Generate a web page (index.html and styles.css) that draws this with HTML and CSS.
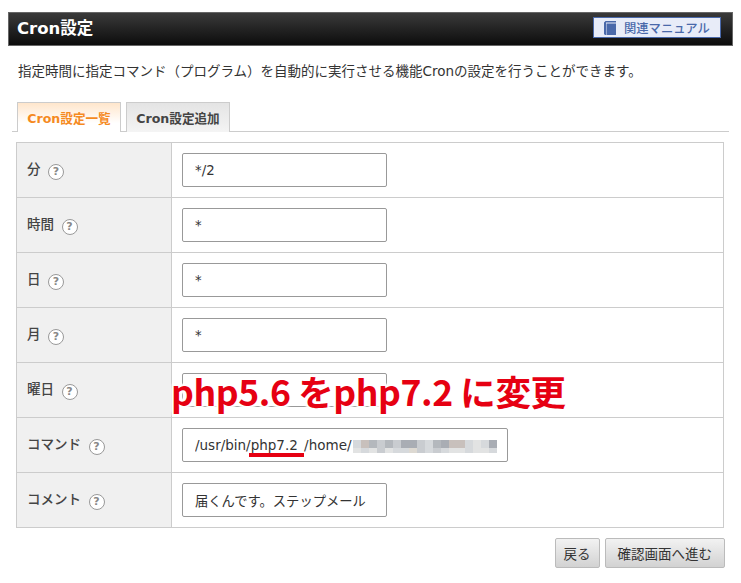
FILE: index.html
```html
<!DOCTYPE html>
<html lang="ja">
<head>
<meta charset="utf-8">
<title>Cron設定</title>
<link rel="stylesheet" href="styles.css">
</head>
<body>
<div class="page">
  <header class="titlebar">
    <h1>Cron設定</h1>
    <a class="manual" href="#">
      <svg class="book" viewBox="0 0 12 14" width="12" height="14"><path d="M0 1.5 1.5 0H12v1.5H2V14H1L0 13Z" fill="#4a69aa"/><rect x="2.5" y="2.5" width="9.5" height="11.5" fill="#4a69aa"/></svg>
      <span>関連マニュアル</span>
    </a>
  </header>
  <p class="lead">指定時間に指定コマンド（プログラム）を自動的に実行させる機能Cronの設定を行うことができます。</p>
  <nav class="tabs">
    <a class="tab active" href="#">Cron設定一覧</a>
    <a class="tab" href="#">Cron設定追加</a>
  </nav>
  <div class="formwrap">
    <table class="form">
      <tr><th>分<span class="help">?</span></th><td><input class="field" value="*/2"></td></tr>
      <tr><th>時間<span class="help">?</span></th><td><input class="field" value="*"></td></tr>
      <tr><th>日<span class="help">?</span></th><td><input class="field" value="*"></td></tr>
      <tr><th>月<span class="help">?</span></th><td><input class="field" value="*"></td></tr>
      <tr><th>曜日<span class="help">?</span></th><td><input class="field" value="*"></td></tr>
      <tr><th>コマンド<span class="help">?</span></th><td>
        <div class="cmd">
          <input class="field wide" value="/usr/bin/php7.2 /home/">
          <div class="underline"></div>
          <div class="blur">
            <i class="c3"></i><i class="c6"></i><i class="c2"></i><i class="c1"></i><i class="c2"></i><i class="c1"></i><i class="c4"></i><i class="c4"></i><i class="c1"></i><i class="c3"></i><i class="c2"></i><i class="c4"></i><i class="c6"></i><i class="c6"></i><i class="c3"></i><i class="c5"></i><i class="c3"></i><i class="c4"></i>
            <i class="c5"></i><i class="c3"></i><i class="c5"></i><i class="c1"></i><i class="c5"></i><i class="c3"></i><i class="c3"></i><i class="c7"></i><i class="c1"></i><i class="c3"></i><i class="c1"></i><i class="c3"></i><i class="c5"></i><i class="c5"></i><i class="c3"></i><i class="c5"></i><i class="c5"></i><i class="c3"></i>
          </div>
        </div>
      </td></tr>
      <tr><th>コメント<span class="help">?</span></th><td><input class="field" value="届くんです。ステップメール"></td></tr>
    </table>
    <div class="note">php5.6 をphp7.2 に変更</div>
  </div>
  <div class="actions">
    <button class="btn" type="button">戻る</button>
    <button class="btn next" type="button">確認画面へ進む</button>
  </div>
</div>
</body>
</html>
```
FILE: styles.css
```css
* { box-sizing: border-box; }
html, body { margin: 0; background: #fff; }
body {
  font-family: "DejaVu Sans", "Noto Sans CJK JP", sans-serif;
  font-size: 13px;
  color: #333;
  overflow: hidden;
}
.page { width: 741px; height: 583px; padding: 12px 8px 0; }
.titlebar {
  height: 34px;
  display: flex;
  align-items: center;
  justify-content: space-between;
  padding: 0 11px 0 8px;
  border: 1px solid #666;
  background: linear-gradient(#3a3a3a, #0c0c0c);
}
.titlebar h1 { margin: 0; font-size: 16.5px; font-weight: bold; color: #fff; line-height: 1; }
.manual {
  width: 128px;
  height: 21px;
  margin-top: -3px;
  display: flex;
  align-items: center;
  gap: 8px;
  padding-left: 10px;
  background: #e8ecf8;
  border: 1px solid #4a69aa;
  color: #4a69aa;
  font-size: 12.3px;
  font-weight: 500;
  text-decoration: none;
}
.lead { margin: 0; padding: 16px 0 0 10px; height: 56px; line-height: 18px; font-size: 13.5px; color: #333; white-space: nowrap; }
.tabs {
  margin: 0 4px;
  height: 30px;
  display: flex;
  gap: 5px;
  padding-left: 5px;
  border-bottom: 1px solid #ccc;
}
.tab {
  width: 104px;
  height: 30px;
  display: flex;
  align-items: center;
  justify-content: center;
  padding-bottom: 1px;
  border: 1px solid #ccc;
  border-bottom: 0;
  background: linear-gradient(#e4e4e4, #f4f4f4);
  color: #444;
  font-size: 12.6px;
  font-weight: bold;
  text-decoration: none;
}
.tab.active {
  height: 30px;
  background: linear-gradient(#ffe6cc, #fff 70%);
  color: #f58a1f;
  position: relative;
  z-index: 1;
  box-shadow: 0 1px 0 #fff;
}
.formwrap { position: relative; margin: 10px 9px 0 8px; }
.form { width: 708px; border-collapse: collapse; table-layout: fixed; }
.form th, .form td { height: 55px; border: 1px solid #ccc; padding: 0; }
.form th {
  width: 155px;
  padding-left: 10px;
  padding-bottom: 3px;
  background: #f0f0f0;
  text-align: left;
  font-size: 13.5px;
  font-weight: 500;
  color: #444;
}
.form td { padding-left: 10px; }
.help {
  display: inline-block;
  width: 16px;
  height: 16px;
  margin-left: 7.5px;
  vertical-align: -1px;
  border: 1px solid #999;
  border-radius: 50%;
  background: #fff;
  color: #888;
  font-size: 11px;
  font-weight: bold;
  line-height: 14px;
  text-align: center;
}
.field {
  display: block;
  width: 205px;
  height: 34px;
  padding: 0 12px;
  border: 1px solid #999;
  border-radius: 2px;
  background: #fff;
  color: #333;
  font: 13.3px "DejaVu Sans", "Noto Sans CJK JP", sans-serif;
}
.field.wide { width: 326px; font-size: 13.5px; word-spacing: 2px; }
.cmd { position: relative; width: 326px; }
.underline { position: absolute; left: 67px; top: 25px; width: 55px; height: 4px; background: #e60012; }
.blur {
  position: absolute;
  left: 171px;
  top: 12px;
  width: 144px;
  height: 13px;
  display: grid;
  grid-template-columns: repeat(18, 8px);
  grid-template-rows: 8px 5px;
  filter: blur(0.4px);
}
.c1 { background: #c9ccd0; }
.c2 { background: #b4b8bd; }
.c3 { background: #d6d9dc; }
.c4 { background: #a9adb4; }
.c5 { background: #e2e3e3; }
.c6 { background: #c8c0bc; }
.c7 { background: #ddd9d2; }
.note {
  position: absolute;
  left: 155px;
  top: 226px;
  font-family: "Noto Sans CJK JP", "Noto Sans", sans-serif;
  font-size: 35.5px;
  line-height: 46px;
  font-weight: bold;
  letter-spacing: -0.4px;
  white-space: nowrap;
  color: #e60012;
  text-shadow: 0 0 3px #fff, 0 0 3px #fff, 2px 2px 2px #fff, -2px -2px 2px #fff, 2px -2px 2px #fff, -2px 2px 2px #fff;
}
.actions { display: flex; justify-content: flex-end; gap: 5px; padding: 10px 8px 0 0; }
.btn {
  height: 30px;
  padding: 0 8px;
  border: 1px solid #bbb;
  border-radius: 2px;
  background: linear-gradient(#f2f2f2, #d2d2d2);
  color: #333;
  font: 13.5px "DejaVu Sans", "Noto Sans CJK JP", sans-serif;
}
.btn.next { padding: 0 12px; }
```
